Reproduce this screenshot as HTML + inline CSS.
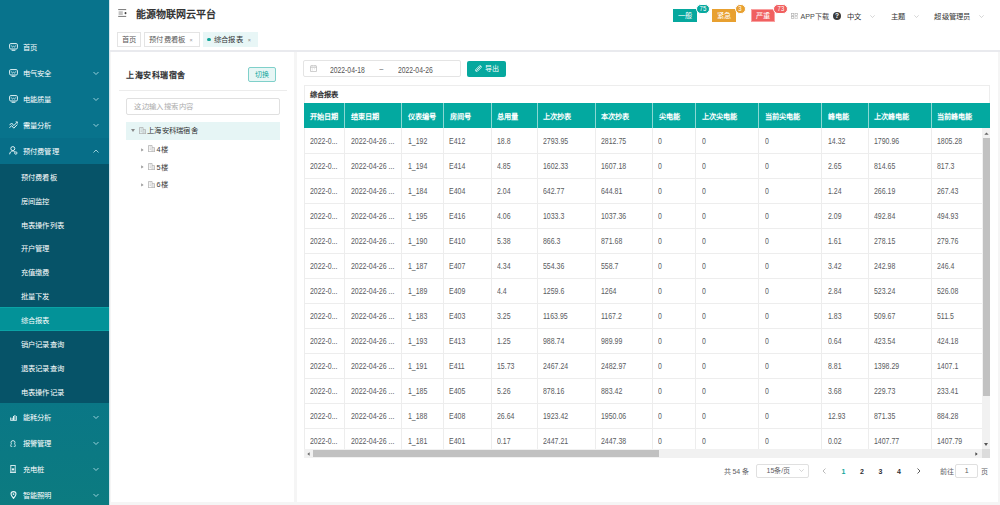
<!DOCTYPE html>
<html lang="zh-CN"><head><meta charset="utf-8">
<style>
*{box-sizing:border-box;margin:0;padding:0}
html,body{width:1000px;height:505px;overflow:hidden;background:#f5f5f5;font-family:"Liberation Sans",sans-serif;color:#606266}
.abs{position:absolute;white-space:nowrap}
#side{position:absolute;left:0;top:0;width:108.5px;height:505px;background:linear-gradient(to bottom,#08738c 0,#08738c 300px,#0c7b80 505px)}
#sideline{position:absolute;left:108.5px;top:0;width:1.5px;height:505px;background:#d5e6ec}
.mi{position:absolute;left:0;width:108.5px;height:26px;color:#fff;font-size:7.3px;letter-spacing:0.3px;line-height:28.8px}
.mi.open{background:#076e88;height:26.2px}
.mi .ic{position:absolute;left:9px;top:0;height:26px;display:flex;align-items:center}
.mi .mt{position:absolute;left:22.5px;top:0}
.mi .chev{position:absolute;left:93px;top:0;height:26px;display:flex;align-items:center}
.submenu{position:absolute;left:0;top:163.7px;width:108.5px;height:239.3px;background:#065368}
.si{position:absolute;left:0;width:108.5px;height:23.93px;line-height:27.2px;padding-left:20.5px;color:#fff;font-size:7.3px;letter-spacing:0.3px}
.si.active{background:#039298;box-shadow:inset 0 1px #0aa3a6,inset 0 -1px #0aa3a6}
#header{position:absolute;left:110px;top:0;width:890px;height:50px;background:#fff}
#hshadow{position:absolute;left:110px;top:50px;width:890px;height:2.4px;background:#e9eaee}
.tab{position:absolute;top:32px;height:15px;border:1px solid #e4e4e4;background:#fff;font-size:7.3px;letter-spacing:0.3px;line-height:13px;color:#595959}
.card{position:absolute;background:#fff}
.th{position:absolute;top:0;height:24.5px;line-height:27.2px;padding-left:6px;color:#fff;font-weight:600;font-size:7.2px;white-space:nowrap;overflow:hidden}
.thsep{position:absolute;top:0;width:1px;height:25px;background:#8ad8d3}
.td{position:absolute;height:25px;line-height:27.3px;font-size:8.6px;color:#5a5c60;white-space:nowrap;transform:scaleX(0.81);transform-origin:0 50%}
.rowline{position:absolute;left:0;width:678px;height:1px;background:#ededed}
.tdsep{position:absolute;top:24.5px;width:1px;height:322px;background:#ededed}
</style></head>
<body>
<div id="side">
<div class="mi" style="top:33.5px"><span class="ic"><svg width="9" height="8" viewBox="0 0 9 8"><rect x="0.6" y="0.6" width="7.8" height="5.4" rx="1.2" fill="none" stroke="#e4f3f6" stroke-width="1"/><path d="M2.2 2.2l1.2 2.2 1.1-1.6 1.1 1.6 1.2-2.2" stroke="#e4f3f6" stroke-width="0.8" fill="none" opacity="0.8"/><path d="M2.6 7.3h3.8" stroke="#e4f3f6" stroke-width="1"/></svg></span><span class="mt">首页</span></div>
<div class="mi" style="top:59.5px"><span class="ic"><svg width="9" height="8" viewBox="0 0 9 8"><rect x="0.6" y="0.6" width="7.8" height="5.4" rx="1.2" fill="none" stroke="#e4f3f6" stroke-width="1"/><path d="M2.2 2.2l1.2 2.2 1.1-1.6 1.1 1.6 1.2-2.2" stroke="#e4f3f6" stroke-width="0.8" fill="none" opacity="0.8"/><path d="M2.6 7.3h3.8" stroke="#e4f3f6" stroke-width="1"/></svg></span><span class="mt">电气安全</span><span class="chev"><svg width="6" height="4.5" viewBox="0 0 6 4.5" style="margin-top:1.2px"><path d="M0.5 1L3 3.5L5.5 1" stroke="#a8dae3" stroke-width="0.9" fill="none"/></svg></span></div>
<div class="mi" style="top:85.5px"><span class="ic"><svg width="9" height="8" viewBox="0 0 9 8"><rect x="0.6" y="0.6" width="7.8" height="5.4" rx="1.2" fill="none" stroke="#e4f3f6" stroke-width="1"/><path d="M2.2 2.2l1.2 2.2 1.1-1.6 1.1 1.6 1.2-2.2" stroke="#e4f3f6" stroke-width="0.8" fill="none" opacity="0.8"/><path d="M2.6 7.3h3.8" stroke="#e4f3f6" stroke-width="1"/></svg></span><span class="mt">电能质量</span><span class="chev"><svg width="6" height="4.5" viewBox="0 0 6 4.5" style="margin-top:1.2px"><path d="M0.5 1L3 3.5L5.5 1" stroke="#a8dae3" stroke-width="0.9" fill="none"/></svg></span></div>
<div class="mi" style="top:111.5px"><span class="ic"><svg width="9" height="8" viewBox="0 0 9 8"><path d="M0.5 4.2L2.6 2l2.2 2.6L8.3 1M0.5 6.8l2.1-2.2 2.2 2.6L8.3 3.6" stroke="#e4f3f6" stroke-width="1" fill="none"/><path d="M6.6 0.8h1.8v1.8" stroke="#e4f3f6" stroke-width="0.8" fill="none"/></svg></span><span class="mt">需量分析</span><span class="chev"><svg width="6" height="4.5" viewBox="0 0 6 4.5" style="margin-top:1.2px"><path d="M0.5 1L3 3.5L5.5 1" stroke="#a8dae3" stroke-width="0.9" fill="none"/></svg></span></div>
<div class="mi open" style="top:137.5px"><span class="ic"><svg width="9" height="9" viewBox="0 0 9 9"><circle cx="3.8" cy="2.6" r="2" fill="none" stroke="#e4f3f6" stroke-width="1"/><path d="M0.7 8.3c0-1.9 1.3-3.3 3.1-3.3.8 0 1.4.2 1.9.6" stroke="#e4f3f6" stroke-width="1" fill="none"/><circle cx="6.8" cy="7" r="1.2" fill="none" stroke="#e4f3f6" stroke-width="0.9"/></svg></span><span class="mt">预付费管理</span><span class="chev"><svg width="6" height="4.5" viewBox="0 0 6 4.5" style="margin-top:1.6px"><path d="M0.5 3.5L3 1l2.5 2.5" stroke="#a8dae3" stroke-width="0.9" fill="none"/></svg></span></div>
<div class="submenu">
<div class="si" style="top:0.00px">预付费看板</div>
<div class="si" style="top:23.93px">房间监控</div>
<div class="si" style="top:47.86px">电表操作列表</div>
<div class="si" style="top:71.79px">开户管理</div>
<div class="si" style="top:95.72px">充值缴费</div>
<div class="si" style="top:119.65px">批量下发</div>
<div class="si active" style="top:143.58px">综合报表</div>
<div class="si" style="top:167.51px">销户记录查询</div>
<div class="si" style="top:191.44px">退表记录查询</div>
<div class="si" style="top:215.37px">电表操作记录</div>
</div>
<div class="mi" style="top:403.3px;line-height:30.6px"><span class="ic" style="left:10.2px;padding-top:2px"><svg width="7" height="7" viewBox="0 0 7 7"><path d="M0.4 6.5h6.2M0.5 6.3V3.5M6.5 6.3V2" stroke="#e4f3f6" stroke-width="0.8" fill="none"/><path d="M1.6 6V3.8h1V6zM3 6V2h1v4zM4.4 6V1h1v5z" fill="#e4f3f6"/></svg></span><span class="mt">能耗分析</span><span class="chev"><svg width="6" height="4.5" viewBox="0 0 6 4.5" style="margin-top:1.2px"><path d="M0.5 1L3 3.5L5.5 1" stroke="#a8dae3" stroke-width="0.9" fill="none"/></svg></span></div>
<div class="mi" style="top:429.3px;line-height:30.6px"><span class="ic" style="left:10.2px;padding-top:2px"><svg width="6" height="7" viewBox="0 0 6 7"><path d="M3 0.6a2 2 0 0 1 2 2c0 .6-.3 1-.6 1.2.5.3.9.8.9 1.4a2.3 2.3 0 0 1-4.6 0c0-.6.4-1.1.9-1.4C1.3 3.600 1 3.2 1 2.6a2 2 0 0 1 2-2z" fill="none" stroke="#e4f3f6" stroke-width="0.9"/></svg></span><span class="mt">报警管理</span><span class="chev"><svg width="6" height="4.5" viewBox="0 0 6 4.5" style="margin-top:1.2px"><path d="M0.5 1L3 3.5L5.5 1" stroke="#a8dae3" stroke-width="0.9" fill="none"/></svg></span></div>
<div class="mi" style="top:455.3px;line-height:30.6px"><span class="ic" style="left:10.2px;padding-top:2px"><svg width="6" height="8" viewBox="0 0 6 8"><rect x="0.8" y="0.5" width="4.4" height="6.6" fill="none" stroke="#e4f3f6" stroke-width="0.9"/><rect x="1.8" y="3.4" width="2.4" height="2" fill="#e4f3f6"/><path d="M0 7.5h6" stroke="#e4f3f6" stroke-width="0.8"/></svg></span><span class="mt">充电桩</span><span class="chev"><svg width="6" height="4.5" viewBox="0 0 6 4.5" style="margin-top:1.2px"><path d="M0.5 1L3 3.5L5.5 1" stroke="#a8dae3" stroke-width="0.9" fill="none"/></svg></span></div>
<div class="mi" style="top:481.3px;line-height:30.6px"><span class="ic" style="left:10.2px;padding-top:2px"><svg width="7" height="8" viewBox="0 0 7 8"><path d="M3.5 7.4C1.8 5.4 1 4.2 1 3.1a2.5 2.5 0 0 1 5 0C6 4.2 5.2 5.4 3.5 7.4z" fill="none" stroke="#e4f3f6" stroke-width="1.1"/><circle cx="3.5" cy="3.1" r="0.9" fill="#e4f3f6"/></svg></span><span class="mt">智能照明</span><span class="chev"><svg width="6" height="4.5" viewBox="0 0 6 4.5" style="margin-top:1.2px"><path d="M0.5 1L3 3.5L5.5 1" stroke="#a8dae3" stroke-width="0.9" fill="none"/></svg></span></div>
</div>
<div id="sideline"></div>

<div id="header">
  <svg class="abs" style="left:8.2px;top:9px" width="9" height="8" viewBox="0 0 9 8"><path d="M0.2 0.6h8M0.2 7.4h8" stroke="#666" stroke-width="0.9"/><rect x="0.6" y="2.2" width="4.2" height="3.8" fill="#c4c4c4"/><rect x="6.6" y="3" width="1.8" height="2.2" rx="0.8" fill="#444"/></svg>
  <div class="abs" style="left:25.5px;top:7.6px;font-size:10px;line-height:14px;font-weight:600;color:#333;letter-spacing:0px">能源物联网云平台</div>
  <div class="tab" style="left:7px;width:24px;padding-left:4px">首页</div>
  <div class="tab" style="left:33.5px;width:56px;padding-left:4.5px">预付费看板<span style="position:absolute;left:45px;top:0.8px;color:#999;font-size:5.5px">×</span></div>
  <div class="tab" style="left:92.7px;width:55.3px;padding-left:10px;background:#e8f6f6;border-color:#e8f6f6;color:#303133">
    <span style="position:absolute;left:3.3px;top:4.6px;width:3.7px;height:3.7px;border-radius:50%;background:#12a59a"></span>综合报表<span style="position:absolute;left:44px;top:0.8px;color:#888;font-size:5.5px">×</span></div>

  <!-- right -->
  <div class="abs" style="left:563.2px;top:9.2px;width:23.6px;height:12.4px;background:#06a89e;color:#fff;font-size:7.2px;line-height:13px;text-align:center">一般</div>
  <div class="abs" style="left:585.8px;top:4.3px;width:14.4px;height:10px;border-radius:5px;background:#06a89e;border:0.8px solid #fff;color:#fff;font-size:7px;line-height:8.4px;text-align:center"><span style="display:inline-block;transform:scaleX(0.85)">75</span></div>
  <div class="abs" style="left:602px;top:9.2px;width:24px;height:12.4px;background:#e8a030;color:#fff;font-size:7.2px;line-height:13px;text-align:center">紧急</div>
  <div class="abs" style="left:624.8px;top:4.3px;width:11.2px;height:10px;border-radius:5px;background:#e8a030;border:0.8px solid #fff;color:#fff;font-size:7px;line-height:8.4px;text-align:center"><span style="display:inline-block;transform:scaleX(0.85)">3</span></div>
  <div class="abs" style="left:640.5px;top:9px;width:24px;height:12.5px;background:#f06060;border:0.8px solid #f9a0a0;color:#fff;font-size:7.2px;line-height:11.2px;text-align:center">严重</div>
  <div class="abs" style="left:663.2px;top:4.3px;width:14.6px;height:10px;border-radius:5px;background:#f06060;border:0.8px solid #fff;color:#fff;font-size:7px;line-height:8.4px;text-align:center"><span style="display:inline-block;transform:scaleX(0.85)">73</span></div>
  <svg class="abs" style="left:681px;top:12.5px" width="7" height="6" viewBox="0 0 7 6"><rect x="0.4" y="0.4" width="2.4" height="2.2" fill="none" stroke="#aaa" stroke-width="0.6"/><rect x="4" y="0.4" width="2.4" height="2.2" fill="none" stroke="#aaa" stroke-width="0.6"/><rect x="0.4" y="3.4" width="2.4" height="2.2" fill="none" stroke="#aaa" stroke-width="0.6"/><path d="M4 3.4h2.4v2.2h-2.4z" fill="none" stroke="#bbb" stroke-width="0.6"/></svg>
  <div class="abs" style="left:690.5px;top:11.6px;font-size:7.1px;line-height:10px;color:#4a4a4a">APP下载</div>
  <div class="abs" style="left:723px;top:11.5px;width:8px;height:8px;border-radius:50%;background:#3a3a3a;color:#fff;font-size:6.5px;line-height:8px;text-align:center;font-weight:bold">?</div>
  <div class="abs" style="left:737px;top:11.8px;font-size:7.3px;letter-spacing:0.3px;line-height:10px;color:#333">中文</div>
  <svg class="abs" style="left:760px;top:15px" width="5" height="3" viewBox="0 0 5 3"><path d="M0.3 0.3L2.5 2.5L4.7 0.3" stroke="#bbb" stroke-width="0.6" fill="none"/></svg>
  <div class="abs" style="left:780.6px;top:11.8px;font-size:7.3px;letter-spacing:0.3px;line-height:10px;color:#333">主题</div>
  <svg class="abs" style="left:803.6px;top:15px" width="5" height="3" viewBox="0 0 5 3"><path d="M0.3 0.3L2.5 2.5L4.7 0.3" stroke="#bbb" stroke-width="0.6" fill="none"/></svg>
  <div class="abs" style="left:824.3px;top:11.8px;font-size:7.3px;letter-spacing:0.3px;line-height:10px;color:#333">超级管理员</div>
  <svg class="abs" style="left:869.3px;top:15px" width="5" height="3" viewBox="0 0 5 3"><path d="M0.3 0.3L2.5 2.5L4.7 0.3" stroke="#bbb" stroke-width="0.6" fill="none"/></svg>
</div>
<div id="hshadow"></div>

<!-- left card -->
<div class="card" style="left:111px;top:52.4px;width:182.9px;height:450.1px"><div class="abs" style="left:0;top:0.6px">
  <div class="abs" style="left:15.3px;top:17px;font-size:8px;letter-spacing:0.5px;line-height:12px;font-weight:600;color:#303133">上海安科瑞宿舍</div>
  <div class="abs" style="left:137px;top:14.1px;width:27.7px;height:14.7px;border:1px solid #7fd0ca;background:#e7f6f5;border-radius:2px;color:#12a69c;font-size:7px;letter-spacing:0.3px;line-height:14px;text-align:center">切换</div>
  <div class="abs" style="left:8px;top:37.2px;width:168px;height:1px;background:#ececec"></div>
  <div class="abs" style="left:15.3px;top:45.4px;width:153.5px;height:16.3px;border:1px solid #e0e0e0;border-radius:2px;padding-left:7px;font-size:7.3px;letter-spacing:0.4px;line-height:16.7px;color:#acacac">这边输入搜索内容</div>
  <div class="abs" style="left:15.3px;top:69.1px;width:153.5px;height:17.6px;background:#e6f5f5"></div>
  <svg class="abs" style="left:19.8px;top:76.5px" width="4" height="3" viewBox="0 0 4 3"><path d="M0 0h4L2 3z" fill="#888"/></svg>
  <svg class="abs" style="left:27.8px;top:74px" width="7" height="7" viewBox="0 0 7 7"><path d="M0.5 6.6V0.5h3.6v6.1M4.1 2.6h2.4v4M0 6.6h7" fill="none" stroke="#aaa" stroke-width="0.7"/><path d="M1.5 1.8h1.6M1.5 3.2h1.6M1.5 4.6h1.6M5 4h.8M5 5.3h.8" stroke="#bbb" stroke-width="0.6"/></svg>
  <div class="abs" style="left:36px;top:72px;font-size:7.3px;letter-spacing:0.3px;line-height:12px;color:#303133">上海安科瑞宿舍</div>

  <svg class="abs" style="left:29.8px;top:94.6px" width="3" height="4" viewBox="0 0 3 4"><path d="M0.2 0.3v3.2l2.4-1.6z" fill="#999"/></svg>
  <svg class="abs" style="left:37px;top:92.4px" width="7" height="7" viewBox="0 0 7 7"><path d="M0.5 6.6V0.5h3.6v6.1M4.1 2.6h2.4v4M0 6.6h7" fill="none" stroke="#aaa" stroke-width="0.7"/><path d="M1.5 1.8h1.6M1.5 3.2h1.6M1.5 4.6h1.6M5 4h.8M5 5.3h.8" stroke="#bbb" stroke-width="0.6"/></svg>
  <div class="abs" style="left:45.6px;top:89.9px;font-size:7.3px;line-height:14px;color:#3a3a3a">4楼</div>

  <svg class="abs" style="left:29.8px;top:112.4px" width="3" height="4" viewBox="0 0 3 4"><path d="M0.2 0.3v3.2l2.4-1.6z" fill="#999"/></svg>
  <svg class="abs" style="left:37px;top:110.2px" width="7" height="7" viewBox="0 0 7 7"><path d="M0.5 6.6V0.5h3.6v6.1M4.1 2.6h2.4v4M0 6.6h7" fill="none" stroke="#aaa" stroke-width="0.7"/><path d="M1.5 1.8h1.6M1.5 3.2h1.6M1.5 4.6h1.6M5 4h.8M5 5.3h.8" stroke="#bbb" stroke-width="0.6"/></svg>
  <div class="abs" style="left:45.6px;top:107.7px;font-size:7.3px;line-height:14px;color:#3a3a3a">5楼</div>

  <svg class="abs" style="left:29.8px;top:130.2px" width="3" height="4" viewBox="0 0 3 4"><path d="M0.2 0.3v3.2l2.4-1.6z" fill="#999"/></svg>
  <svg class="abs" style="left:37px;top:128px" width="7" height="7" viewBox="0 0 7 7"><path d="M0.5 6.6V0.5h3.6v6.1M4.1 2.6h2.4v4M0 6.6h7" fill="none" stroke="#aaa" stroke-width="0.7"/><path d="M1.5 1.8h1.6M1.5 3.2h1.6M1.5 4.6h1.6M5 4h.8M5 5.3h.8" stroke="#bbb" stroke-width="0.6"/></svg>
  <div class="abs" style="left:45.6px;top:125.5px;font-size:7.3px;line-height:14px;color:#3a3a3a">6楼</div>
</div></div>

<!-- right card -->
<div class="card" style="left:296.5px;top:52.4px;width:701.5px;height:450.1px"><div class="abs" style="left:-0.5px;top:0.6px">
  <div class="abs" style="left:6.7px;top:7.4px;width:158.8px;height:16.3px;border:1px solid #e4e4e4;border-radius:2px"></div>
  <svg class="abs" style="left:13.8px;top:12.3px" width="7" height="7" viewBox="0 0 7 7"><rect x="0.4" y="0.8" width="6.2" height="5.8" rx="0.6" fill="none" stroke="#b4b4b4" stroke-width="0.7"/><path d="M0.4 2.4h6.2M2 0.2v1.2M5 0.2v1.2" stroke="#b4b4b4" stroke-width="0.6"/><path d="M1.8 3.8h1M4 3.8h1M1.8 5h1" stroke="#ccc" stroke-width="0.6"/></svg>
  <div class="abs" style="left:34px;top:11.6px;font-size:8.6px;line-height:10px;color:#555;transform:scaleX(0.79);transform-origin:0 50%">2022-04-18</div>
  <div class="abs" style="left:83px;top:11.6px;font-size:8px;line-height:10px;color:#555">~</div>
  <div class="abs" style="left:101.9px;top:11.6px;font-size:8.6px;line-height:10px;color:#555;transform:scaleX(0.79);transform-origin:0 50%">2022-04-26</div>
  <div class="abs" style="left:171.3px;top:8px;width:38.7px;height:15.7px;background:#06a89e;border-radius:2px"></div>
  <svg class="abs" style="left:178.5px;top:12.3px" width="7" height="7" viewBox="0 0 7 7"><path d="M1.2 5.8L5.8 1.2M2.5 6.2L6.2 2.5a1.3 1.3 0 0 0-1.7-1.7L0.8 4.5a1.2 1.2 0 0 0 1.7 1.7z" stroke="#fff" stroke-width="0.8" fill="none"/></svg>
  <div class="abs" style="left:189.2px;top:10.8px;font-size:7px;line-height:10px;color:#fff">导出</div>

  <!-- inner card -->
  <div class="abs" style="left:7.5px;top:32.3px;width:686.5px;height:372.5px;border:1px solid #ededed"></div>
  <div class="abs" style="left:13.5px;top:35.8px;font-size:7.3px;letter-spacing:0.3px;line-height:11px;font-weight:600;color:#303133">综合报表</div>

  <div class="abs" style="left:8.4px;top:50.2px;width:685.6px;height:25px;background:#03a9a0"></div>
  <div class="abs" style="left:8.4px;top:50.5px;width:685.6px;height:400px;overflow:hidden">
<div class="th" style="left:0.0px;width:40.4px">开始日期</div>
<div class="th" style="left:40.4px;width:57.0px">结束日期</div>
<div class="th" style="left:97.4px;width:41.8px">仪表编号</div>
<div class="th" style="left:139.2px;width:47.3px">房间号</div>
<div class="th" style="left:186.5px;width:46.6px">总用量</div>
<div class="th" style="left:233.1px;width:57.5px">上次抄表</div>
<div class="th" style="left:290.6px;width:57.6px">本次抄表</div>
<div class="th" style="left:348.2px;width:43.2px">尖电能</div>
<div class="th" style="left:391.4px;width:63.0px">上次尖电能</div>
<div class="th" style="left:454.4px;width:63.0px">当前尖电能</div>
<div class="th" style="left:517.4px;width:46.1px">峰电能</div>
<div class="th" style="left:563.5px;width:63.0px">上次峰电能</div>
<div class="th" style="left:626.5px;width:59.1px">当前峰电能</div>
<div class="thsep" style="left:40.1px"></div>
<div class="thsep" style="left:97.1px"></div>
<div class="thsep" style="left:138.9px"></div>
<div class="thsep" style="left:186.2px"></div>
<div class="thsep" style="left:232.8px"></div>
<div class="thsep" style="left:290.3px"></div>
<div class="thsep" style="left:347.9px"></div>
<div class="thsep" style="left:391.1px"></div>
<div class="thsep" style="left:454.1px"></div>
<div class="thsep" style="left:517.1px"></div>
<div class="thsep" style="left:563.2px"></div>
<div class="thsep" style="left:626.2px"></div>
<div class="td" style="left:5.9px;top:24.5px">2022-0...</div>
<div class="td" style="left:46.3px;top:24.5px">2022-04-26 ...</div>
<div class="td" style="left:103.3px;top:24.5px">1_192</div>
<div class="td" style="left:145.1px;top:24.5px">E412</div>
<div class="td" style="left:192.4px;top:24.5px">18.8</div>
<div class="td" style="left:239.0px;top:24.5px">2793.95</div>
<div class="td" style="left:296.5px;top:24.5px">2812.75</div>
<div class="td" style="left:354.1px;top:24.5px">0</div>
<div class="td" style="left:397.3px;top:24.5px">0</div>
<div class="td" style="left:460.3px;top:24.5px">0</div>
<div class="td" style="left:523.3px;top:24.5px">14.32</div>
<div class="td" style="left:569.4px;top:24.5px">1790.96</div>
<div class="td" style="left:632.4px;top:24.5px">1805.28</div>
<div class="rowline" style="top:49.5px"></div>
<div class="td" style="left:5.9px;top:49.5px">2022-0...</div>
<div class="td" style="left:46.3px;top:49.5px">2022-04-26 ...</div>
<div class="td" style="left:103.3px;top:49.5px">1_194</div>
<div class="td" style="left:145.1px;top:49.5px">E414</div>
<div class="td" style="left:192.4px;top:49.5px">4.85</div>
<div class="td" style="left:239.0px;top:49.5px">1602.33</div>
<div class="td" style="left:296.5px;top:49.5px">1607.18</div>
<div class="td" style="left:354.1px;top:49.5px">0</div>
<div class="td" style="left:397.3px;top:49.5px">0</div>
<div class="td" style="left:460.3px;top:49.5px">0</div>
<div class="td" style="left:523.3px;top:49.5px">2.65</div>
<div class="td" style="left:569.4px;top:49.5px">814.65</div>
<div class="td" style="left:632.4px;top:49.5px">817.3</div>
<div class="rowline" style="top:74.5px"></div>
<div class="td" style="left:5.9px;top:74.5px">2022-0...</div>
<div class="td" style="left:46.3px;top:74.5px">2022-04-26 ...</div>
<div class="td" style="left:103.3px;top:74.5px">1_184</div>
<div class="td" style="left:145.1px;top:74.5px">E404</div>
<div class="td" style="left:192.4px;top:74.5px">2.04</div>
<div class="td" style="left:239.0px;top:74.5px">642.77</div>
<div class="td" style="left:296.5px;top:74.5px">644.81</div>
<div class="td" style="left:354.1px;top:74.5px">0</div>
<div class="td" style="left:397.3px;top:74.5px">0</div>
<div class="td" style="left:460.3px;top:74.5px">0</div>
<div class="td" style="left:523.3px;top:74.5px">1.24</div>
<div class="td" style="left:569.4px;top:74.5px">266.19</div>
<div class="td" style="left:632.4px;top:74.5px">267.43</div>
<div class="rowline" style="top:99.5px"></div>
<div class="td" style="left:5.9px;top:99.5px">2022-0...</div>
<div class="td" style="left:46.3px;top:99.5px">2022-04-26 ...</div>
<div class="td" style="left:103.3px;top:99.5px">1_195</div>
<div class="td" style="left:145.1px;top:99.5px">E416</div>
<div class="td" style="left:192.4px;top:99.5px">4.06</div>
<div class="td" style="left:239.0px;top:99.5px">1033.3</div>
<div class="td" style="left:296.5px;top:99.5px">1037.36</div>
<div class="td" style="left:354.1px;top:99.5px">0</div>
<div class="td" style="left:397.3px;top:99.5px">0</div>
<div class="td" style="left:460.3px;top:99.5px">0</div>
<div class="td" style="left:523.3px;top:99.5px">2.09</div>
<div class="td" style="left:569.4px;top:99.5px">492.84</div>
<div class="td" style="left:632.4px;top:99.5px">494.93</div>
<div class="rowline" style="top:124.5px"></div>
<div class="td" style="left:5.9px;top:124.5px">2022-0...</div>
<div class="td" style="left:46.3px;top:124.5px">2022-04-26 ...</div>
<div class="td" style="left:103.3px;top:124.5px">1_190</div>
<div class="td" style="left:145.1px;top:124.5px">E410</div>
<div class="td" style="left:192.4px;top:124.5px">5.38</div>
<div class="td" style="left:239.0px;top:124.5px">866.3</div>
<div class="td" style="left:296.5px;top:124.5px">871.68</div>
<div class="td" style="left:354.1px;top:124.5px">0</div>
<div class="td" style="left:397.3px;top:124.5px">0</div>
<div class="td" style="left:460.3px;top:124.5px">0</div>
<div class="td" style="left:523.3px;top:124.5px">1.61</div>
<div class="td" style="left:569.4px;top:124.5px">278.15</div>
<div class="td" style="left:632.4px;top:124.5px">279.76</div>
<div class="rowline" style="top:149.5px"></div>
<div class="td" style="left:5.9px;top:149.5px">2022-0...</div>
<div class="td" style="left:46.3px;top:149.5px">2022-04-26 ...</div>
<div class="td" style="left:103.3px;top:149.5px">1_187</div>
<div class="td" style="left:145.1px;top:149.5px">E407</div>
<div class="td" style="left:192.4px;top:149.5px">4.34</div>
<div class="td" style="left:239.0px;top:149.5px">554.36</div>
<div class="td" style="left:296.5px;top:149.5px">558.7</div>
<div class="td" style="left:354.1px;top:149.5px">0</div>
<div class="td" style="left:397.3px;top:149.5px">0</div>
<div class="td" style="left:460.3px;top:149.5px">0</div>
<div class="td" style="left:523.3px;top:149.5px">3.42</div>
<div class="td" style="left:569.4px;top:149.5px">242.98</div>
<div class="td" style="left:632.4px;top:149.5px">246.4</div>
<div class="rowline" style="top:174.5px"></div>
<div class="td" style="left:5.9px;top:174.5px">2022-0...</div>
<div class="td" style="left:46.3px;top:174.5px">2022-04-26 ...</div>
<div class="td" style="left:103.3px;top:174.5px">1_189</div>
<div class="td" style="left:145.1px;top:174.5px">E409</div>
<div class="td" style="left:192.4px;top:174.5px">4.4</div>
<div class="td" style="left:239.0px;top:174.5px">1259.6</div>
<div class="td" style="left:296.5px;top:174.5px">1264</div>
<div class="td" style="left:354.1px;top:174.5px">0</div>
<div class="td" style="left:397.3px;top:174.5px">0</div>
<div class="td" style="left:460.3px;top:174.5px">0</div>
<div class="td" style="left:523.3px;top:174.5px">2.84</div>
<div class="td" style="left:569.4px;top:174.5px">523.24</div>
<div class="td" style="left:632.4px;top:174.5px">526.08</div>
<div class="rowline" style="top:199.5px"></div>
<div class="td" style="left:5.9px;top:199.5px">2022-0...</div>
<div class="td" style="left:46.3px;top:199.5px">2022-04-26 ...</div>
<div class="td" style="left:103.3px;top:199.5px">1_183</div>
<div class="td" style="left:145.1px;top:199.5px">E403</div>
<div class="td" style="left:192.4px;top:199.5px">3.25</div>
<div class="td" style="left:239.0px;top:199.5px">1163.95</div>
<div class="td" style="left:296.5px;top:199.5px">1167.2</div>
<div class="td" style="left:354.1px;top:199.5px">0</div>
<div class="td" style="left:397.3px;top:199.5px">0</div>
<div class="td" style="left:460.3px;top:199.5px">0</div>
<div class="td" style="left:523.3px;top:199.5px">1.83</div>
<div class="td" style="left:569.4px;top:199.5px">509.67</div>
<div class="td" style="left:632.4px;top:199.5px">511.5</div>
<div class="rowline" style="top:224.5px"></div>
<div class="td" style="left:5.9px;top:224.5px">2022-0...</div>
<div class="td" style="left:46.3px;top:224.5px">2022-04-26 ...</div>
<div class="td" style="left:103.3px;top:224.5px">1_193</div>
<div class="td" style="left:145.1px;top:224.5px">E413</div>
<div class="td" style="left:192.4px;top:224.5px">1.25</div>
<div class="td" style="left:239.0px;top:224.5px">988.74</div>
<div class="td" style="left:296.5px;top:224.5px">989.99</div>
<div class="td" style="left:354.1px;top:224.5px">0</div>
<div class="td" style="left:397.3px;top:224.5px">0</div>
<div class="td" style="left:460.3px;top:224.5px">0</div>
<div class="td" style="left:523.3px;top:224.5px">0.64</div>
<div class="td" style="left:569.4px;top:224.5px">423.54</div>
<div class="td" style="left:632.4px;top:224.5px">424.18</div>
<div class="rowline" style="top:249.5px"></div>
<div class="td" style="left:5.9px;top:249.5px">2022-0...</div>
<div class="td" style="left:46.3px;top:249.5px">2022-04-26 ...</div>
<div class="td" style="left:103.3px;top:249.5px">1_191</div>
<div class="td" style="left:145.1px;top:249.5px">E411</div>
<div class="td" style="left:192.4px;top:249.5px">15.73</div>
<div class="td" style="left:239.0px;top:249.5px">2467.24</div>
<div class="td" style="left:296.5px;top:249.5px">2482.97</div>
<div class="td" style="left:354.1px;top:249.5px">0</div>
<div class="td" style="left:397.3px;top:249.5px">0</div>
<div class="td" style="left:460.3px;top:249.5px">0</div>
<div class="td" style="left:523.3px;top:249.5px">8.81</div>
<div class="td" style="left:569.4px;top:249.5px">1398.29</div>
<div class="td" style="left:632.4px;top:249.5px">1407.1</div>
<div class="rowline" style="top:274.5px"></div>
<div class="td" style="left:5.9px;top:274.5px">2022-0...</div>
<div class="td" style="left:46.3px;top:274.5px">2022-04-26 ...</div>
<div class="td" style="left:103.3px;top:274.5px">1_185</div>
<div class="td" style="left:145.1px;top:274.5px">E405</div>
<div class="td" style="left:192.4px;top:274.5px">5.26</div>
<div class="td" style="left:239.0px;top:274.5px">878.16</div>
<div class="td" style="left:296.5px;top:274.5px">883.42</div>
<div class="td" style="left:354.1px;top:274.5px">0</div>
<div class="td" style="left:397.3px;top:274.5px">0</div>
<div class="td" style="left:460.3px;top:274.5px">0</div>
<div class="td" style="left:523.3px;top:274.5px">3.68</div>
<div class="td" style="left:569.4px;top:274.5px">229.73</div>
<div class="td" style="left:632.4px;top:274.5px">233.41</div>
<div class="rowline" style="top:299.5px"></div>
<div class="td" style="left:5.9px;top:299.5px">2022-0...</div>
<div class="td" style="left:46.3px;top:299.5px">2022-04-26 ...</div>
<div class="td" style="left:103.3px;top:299.5px">1_188</div>
<div class="td" style="left:145.1px;top:299.5px">E408</div>
<div class="td" style="left:192.4px;top:299.5px">26.64</div>
<div class="td" style="left:239.0px;top:299.5px">1923.42</div>
<div class="td" style="left:296.5px;top:299.5px">1950.06</div>
<div class="td" style="left:354.1px;top:299.5px">0</div>
<div class="td" style="left:397.3px;top:299.5px">0</div>
<div class="td" style="left:460.3px;top:299.5px">0</div>
<div class="td" style="left:523.3px;top:299.5px">12.93</div>
<div class="td" style="left:569.4px;top:299.5px">871.35</div>
<div class="td" style="left:632.4px;top:299.5px">884.28</div>
<div class="rowline" style="top:324.5px"></div>
<div class="td" style="left:5.9px;top:324.5px">2022-0...</div>
<div class="td" style="left:46.3px;top:324.5px">2022-04-26 ...</div>
<div class="td" style="left:103.3px;top:324.5px">1_181</div>
<div class="td" style="left:145.1px;top:324.5px">E401</div>
<div class="td" style="left:192.4px;top:324.5px">0.17</div>
<div class="td" style="left:239.0px;top:324.5px">2447.21</div>
<div class="td" style="left:296.5px;top:324.5px">2447.38</div>
<div class="td" style="left:354.1px;top:324.5px">0</div>
<div class="td" style="left:397.3px;top:324.5px">0</div>
<div class="td" style="left:460.3px;top:324.5px">0</div>
<div class="td" style="left:523.3px;top:324.5px">0.02</div>
<div class="td" style="left:569.4px;top:324.5px">1407.77</div>
<div class="td" style="left:632.4px;top:324.5px">1407.79</div>
<div class="rowline" style="top:349.5px"></div>
<div class="tdsep" style="left:40.1px"></div>
<div class="tdsep" style="left:97.1px"></div>
<div class="tdsep" style="left:138.9px"></div>
<div class="tdsep" style="left:186.2px"></div>
<div class="tdsep" style="left:232.8px"></div>
<div class="tdsep" style="left:290.3px"></div>
<div class="tdsep" style="left:347.9px"></div>
<div class="tdsep" style="left:391.1px"></div>
<div class="tdsep" style="left:454.1px"></div>
<div class="tdsep" style="left:517.1px"></div>
<div class="tdsep" style="left:563.2px"></div>
<div class="tdsep" style="left:626.2px"></div>
  </div>
  <!-- scrollbars -->
  <div class="abs" style="left:686px;top:75px;width:8px;height:322px;background:#f1f1f1"></div>
  <div class="abs" style="left:687px;top:85.2px;width:6.8px;height:257.8px;background:#c1c1c1"></div>
  <svg class="abs" style="left:688px;top:390px" width="4" height="3" viewBox="0 0 4 3"><path d="M0 0L2 3L4 0z" fill="#555"/></svg>
  <svg class="abs" style="left:688.3px;top:79px" width="5" height="3" viewBox="0 0 5 3"><path d="M0.3 2.8L2.5 0.4L4.7 2.8z" fill="#666"/></svg>
  <div class="abs" style="left:8px;top:396.4px;width:678px;height:8.2px;background:#f1f1f1"></div>
  <div class="abs" style="left:16.8px;top:397.2px;width:346px;height:6.5px;background:#c1c1c1"></div>
  <svg class="abs" style="left:11.2px;top:398.6px" width="3" height="4" viewBox="0 0 3 4"><path d="M2.6 0.3v3.4L0.3 2z" fill="#666"/></svg>
  <svg class="abs" style="left:679px;top:398.6px" width="3" height="4" viewBox="0 0 3 4"><path d="M0.4 0.3v3.4L2.7 2z" fill="#444"/></svg>
  <div class="abs" style="left:686px;top:396.4px;width:8px;height:8.2px;background:#dcdcdc"></div>

  <!-- pagination -->
  <div class="abs" style="left:427.5px;top:414.1px;font-size:7px;line-height:10px;color:#606266">共 54 条</div>
  <div class="abs" style="left:460px;top:410.7px;width:52.5px;height:14.8px;border:1px solid #e0e0e0;border-radius:2px;padding-left:9.5px;font-size:7px;line-height:12.5px;color:#606266">15条/页</div>
  <svg class="abs" style="left:503px;top:416.5px" width="5" height="3" viewBox="0 0 5 3"><path d="M0.3 0.3L2.5 2.5L4.7 0.3" stroke="#bbb" stroke-width="0.6" fill="none"/></svg>
  <svg class="abs" style="left:525.5px;top:414.8px" width="4" height="6" viewBox="0 0 4 6"><path d="M3.5 0.5L1 3l2.5 2.5" stroke="#aaa" stroke-width="0.8" fill="none"/></svg>
  <div class="abs" style="left:545.5px;top:414.1px;font-size:7px;line-height:10px;color:#12a69c;font-weight:bold">1</div>
  <div class="abs" style="left:564px;top:414.1px;font-size:7px;line-height:10px;color:#303133;font-weight:bold">2</div>
  <div class="abs" style="left:582.5px;top:414.1px;font-size:7px;line-height:10px;color:#303133;font-weight:bold">3</div>
  <div class="abs" style="left:601px;top:414.1px;font-size:7px;line-height:10px;color:#303133;font-weight:bold">4</div>
  <svg class="abs" style="left:621px;top:414.8px" width="4" height="6" viewBox="0 0 4 6"><path d="M0.5 0.5L3 3L0.5 5.5" stroke="#333" stroke-width="0.8" fill="none"/></svg>
  <div class="abs" style="left:643.5px;top:414.1px;font-size:7px;line-height:10px;color:#606266">前往</div>
  <div class="abs" style="left:659px;top:410.7px;width:23.4px;height:14.8px;border:1px solid #e0e0e0;border-radius:2px;font-size:7px;line-height:12.5px;text-align:center;color:#606266">1</div>
  <div class="abs" style="left:685px;top:414.1px;font-size:7px;line-height:10px;color:#606266">页</div>
</div></div>
</body></html>
